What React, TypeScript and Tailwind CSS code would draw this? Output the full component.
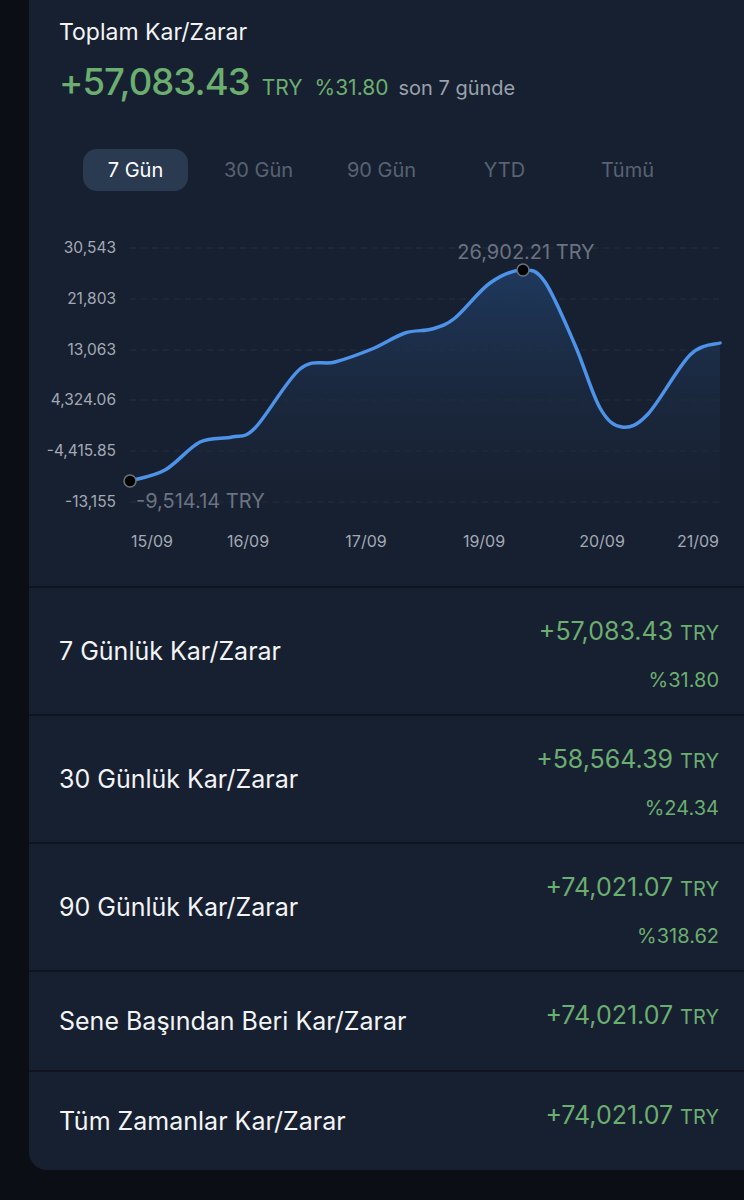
import React from "react";

const tabs = ["7 Gün", "30 Gün", "90 Gün", "YTD", "Tümü"];

const yTicks = [
  { label: "30,543", y: 248 },
  { label: "21,803", y: 299 },
  { label: "13,063", y: 350 },
  { label: "4,324.06", y: 400 },
  { label: "-4,415.85", y: 451 },
  { label: "-13,155", y: 502 },
];

const xTicks = [
  { label: "15/09", x: 152 },
  { label: "16/09", x: 248 },
  { label: "17/09", x: 366 },
  { label: "19/09", x: 484 },
  { label: "20/09", x: 602 },
  { label: "21/09", x: 698 },
];

const pts: [number, number][] = [
  [130, 481],
  [165, 470],
  [200, 442],
  [232, 437],
  [255, 428],
  [300, 369],
  [335, 362],
  [372, 349],
  [405, 333],
  [432, 329],
  [455, 318],
  [490, 283],
  [523, 270],
  [545, 282],
  [575, 345],
  [600, 408],
  [622, 427],
  [648, 414],
  [690, 355],
  [720, 343],
];

function smoothPath(p: [number, number][]) {
  let d = `M ${p[0][0]} ${p[0][1]}`;
  for (let i = 0; i < p.length - 1; i++) {
    const p0 = p[i - 1] ?? p[i];
    const p1 = p[i];
    const p2 = p[i + 1];
    const p3 = p[i + 2] ?? p2;
    const c1x = p1[0] + (p2[0] - p0[0]) / 6;
    const c1y = p1[1] + (p2[1] - p0[1]) / 6;
    const c2x = p2[0] - (p3[0] - p1[0]) / 6;
    const c2y = p2[1] - (p3[1] - p1[1]) / 6;
    d += ` C ${c1x} ${c1y} ${c2x} ${c2y} ${p2[0]} ${p2[1]}`;
  }
  return d;
}

const rows = [
  { label: "7 Günlük Kar/Zarar", value: "+57,083.43", pct: "%31.80" },
  { label: "30 Günlük Kar/Zarar", value: "+58,564.39", pct: "%24.34" },
  { label: "90 Günlük Kar/Zarar", value: "+74,021.07", pct: "%318.62" },
  { label: "Sene Başından Beri Kar/Zarar", value: "+74,021.07" },
  { label: "Tüm Zamanlar Kar/Zarar", value: "+74,021.07" },
];

function Chart() {
  const line = smoothPath(pts);
  const area = `${line} L 720 505 L 130 505 Z`;
  return (
    <svg viewBox="29 225 715 361" width={715} height={361} className="block">
      <defs>
        <linearGradient id="fill" x1="0" y1="270" x2="0" y2="505" gradientUnits="userSpaceOnUse">
          <stop offset="0" stopColor="#1f3a5f" stopOpacity="0.95" />
          <stop offset="1" stopColor="#1a2436" stopOpacity="0.2" />
        </linearGradient>
      </defs>
      {yTicks.map((t) => (
        <g key={t.label}>
          <line x1={130} x2={720} y1={t.y} y2={t.y} stroke="#252e3d" strokeWidth={1} strokeDasharray="6 5" />
          <text x={116} y={t.y + 5} textAnchor="end" fill="#a3a9b4" fontSize={15.5} fontFamily="Inter, sans-serif">
            {t.label}
          </text>
        </g>
      ))}
      <path d={area} fill="url(#fill)" />
      <path d={line} fill="none" stroke="#4d93ea" strokeWidth={3.5} strokeLinecap="round" />
      <circle cx={130} cy={481} r={6} fill="#000" stroke="#6b7280" strokeWidth={1.5} />
      <circle cx={523} cy={270} r={6} fill="#000" stroke="#6b7280" strokeWidth={1.5} />
      <text x={526} y={259} textAnchor="middle" fill="#6b7383" fontSize={20} fontFamily="Inter, sans-serif">
        26,902.21 TRY
      </text>
      <text x={136} y={508} fill="#6b7383" fontSize={20} fontFamily="Inter, sans-serif">
        -9,514.14 TRY
      </text>
      {xTicks.map((t) => (
        <text key={t.label} x={t.x} y={547} textAnchor="middle" fill="#a3a9b4" fontSize={16} fontFamily="Inter, sans-serif">
          {t.label}
        </text>
      ))}
    </svg>
  );
}

export default function App() {
  return (
    <div className="min-h-[1200px] overflow-hidden bg-[#0b0e15] pb-[30px] font-['Inter',sans-serif]">
      <div className="ml-[29px] rounded-bl-[18px] bg-[#172030]">
        <div className="px-[30px] pt-[17px]">
          <h1 className="text-[23px] leading-[30px] text-[#f3f4f6]">Toplam Kar/Zarar</h1>
          <div className="mt-[13px] flex items-baseline">
            <span className="text-[36.5px] leading-[44px] font-medium tracking-tight text-[#6bae70]">+57,083.43</span>
            <span className="ml-[12px] text-[21px] text-[#6bae70]">TRY</span>
            <span className="ml-[12px] text-[21px] text-[#6bae70]">%31.80</span>
            <span className="ml-[10px] text-[20px] text-[#9aa1ad]">son 7 günde</span>
          </div>
        </div>
        <div className="mt-[45px] ml-[45px] grid w-[615px] grid-cols-5">
          {tabs.map((t, i) => (
            <div key={t} className="flex justify-center">
              <span
                className={
                  i === 0
                    ? "flex h-[42px] w-[105px] items-center justify-center rounded-[14px] bg-[#2a3a50] text-[20px] text-white"
                    : "flex h-[42px] w-[105px] items-center justify-center text-[20px] text-[#586273]"
                }
              >
                {t}
              </span>
            </div>
          ))}
        </div>
        <div className="mt-[34px]">
          <Chart />
        </div>
        {rows.map((r) => (
          <div
            key={r.label}
            className={`flex items-center justify-between border-t-2 border-[#0f141d] pl-[30px] pr-[25px] ${
              r.pct ? "h-[128px]" : "h-[100px]"
            }`}
          >
            <span className="pt-[2px] text-[25px] text-[#f3f4f6]">{r.label}</span>
            <div className={`flex flex-col items-end ${r.pct ? "mt-[6px] gap-[15px]" : "mb-[10px]"}`}>
              <div className="flex items-baseline gap-[7px]">
                <span className="text-[25px] text-[#6bae70]">{r.value}</span>
                <span className="text-[20px] text-[#6bae70]">TRY</span>
              </div>
              {r.pct && <span className="text-[20px] text-[#6bae70]">{r.pct}</span>}
            </div>
          </div>
        ))}
      </div>
    </div>
  );
}
